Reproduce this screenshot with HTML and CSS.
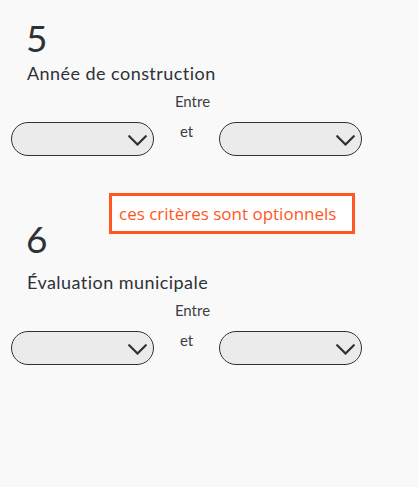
FILE: index.html
```html
<!DOCTYPE html>
<html lang="fr">
<head>
    <meta charset="UTF-8">
    <meta name="viewport" content="width=device-width, initial-scale=1.0">
    <title>Critères</title>
    <link rel="stylesheet" href="styles.css">
</head>
<body>
    <div class="criteria">
        <section class="step">
            <div class="step-num">5</div>
            <div class="step-title">Année de construction</div>
            <div class="range">
                <div class="select-wrap">
                    <select class="range-select"></select>
                    <svg class="chevron" width="19" height="11" viewBox="0 0 19 11"><path d="M1.2 1.2 L9.5 9.5 L17.8 1.2" fill="none" stroke="#2e3136" stroke-width="2.2" stroke-linecap="round"/></svg>
                </div>
                <div class="range-words">
                    <span class="word-between">Entre</span>
                    <span class="word-and">et</span>
                </div>
                <div class="select-wrap">
                    <select class="range-select"></select>
                    <svg class="chevron" width="19" height="11" viewBox="0 0 19 11"><path d="M1.2 1.2 L9.5 9.5 L17.8 1.2" fill="none" stroke="#2e3136" stroke-width="2.2" stroke-linecap="round"/></svg>
                </div>
            </div>
        </section>

        <div class="note">ces critères sont optionnels</div>

        <section class="step">
            <div class="step-num">6</div>
            <div class="step-title step-title-accent">Évaluation municipale</div>
            <div class="range">
                <div class="select-wrap">
                    <select class="range-select"></select>
                    <svg class="chevron" width="19" height="11" viewBox="0 0 19 11"><path d="M1.2 1.2 L9.5 9.5 L17.8 1.2" fill="none" stroke="#2e3136" stroke-width="2.2" stroke-linecap="round"/></svg>
                </div>
                <div class="range-words">
                    <span class="word-between">Entre</span>
                    <span class="word-and">et</span>
                </div>
                <div class="select-wrap">
                    <select class="range-select"></select>
                    <svg class="chevron" width="19" height="11" viewBox="0 0 19 11"><path d="M1.2 1.2 L9.5 9.5 L17.8 1.2" fill="none" stroke="#2e3136" stroke-width="2.2" stroke-linecap="round"/></svg>
                </div>
            </div>
        </section>
    </div>
</body>
</html>
```

FILE: styles.css
```css
body {
    margin: 0;
    background: #f9f9f9;
    font-family: Lato, "Noto Sans", sans-serif;
    color: #2e3136;
}

.criteria {
    position: relative;
    padding: 18px 0 0 11px;
}

.step {
    margin-bottom: 63px;
}

.step-num {
    font-size: 37px;
    line-height: 40px;
    margin-left: 15px;
    font-weight: 400;
}

.step-title {
    font-size: 18px;
    line-height: 24px;
    letter-spacing: 0.45px;
    margin-left: 16px;
    margin-top: 3px;
}

.step-title-accent {
    margin-top: 11px;
}

.range {
    display: flex;
    align-items: flex-start;
    margin-top: 6px;
}

.select-wrap {
    position: relative;
    margin-top: 31px;
}

.range-select {
    appearance: none;
    -webkit-appearance: none;
    display: block;
    width: 143px;
    height: 34px;
    border: 1px solid #2e3136;
    border-radius: 17px;
    background: #ebebeb;
    margin: 0;
}

.chevron {
    position: absolute;
    right: 7px;
    top: 13px;
}

.range-words {
    width: 65px;
    display: flex;
    flex-direction: column;
    align-items: center;
    font-size: 15px;
    color: #3c3f44;
    padding-top: 1px;
}

.word-between {
    line-height: 18px;
    margin-left: 12px;
}

.word-and {
    line-height: 18px;
    margin-top: 12px;
}

.note {
    position: absolute;
    left: 109px;
    top: 193px;
    width: 233px;
    height: 35px;
    border: 3px solid #ff5722;
    background: #fff;
    color: #ff5722;
    font-family: "Open Sans", "Noto Sans", sans-serif;
    font-size: 17px;
    line-height: 35px;
    padding-left: 7px;
}
```
